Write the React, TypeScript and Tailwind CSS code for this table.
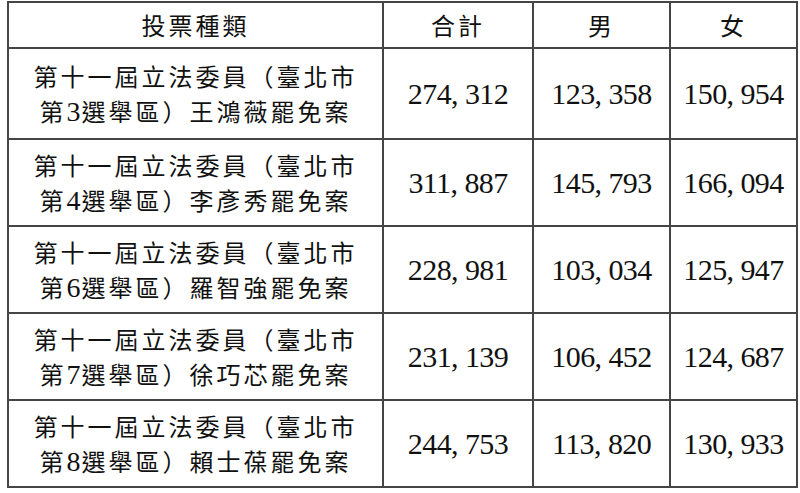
import React from "react";

const rows = [
  { d: "3", name: "王鴻薇", total: ["274", "312"], m: ["123", "358"], f: ["150", "954"] },
  { d: "4", name: "李彥秀", total: ["311", "887"], m: ["145", "793"], f: ["166", "094"] },
  { d: "6", name: "羅智強", total: ["228", "981"], m: ["103", "034"], f: ["125", "947"] },
  { d: "7", name: "徐巧芯", total: ["231", "139"], m: ["106", "452"], f: ["124", "687"] },
  { d: "8", name: "賴士葆", total: ["244", "753"], m: ["113", "820"], f: ["130", "933"] },
];

const cjk = "[font-family:'Noto_Sans_CJK_TC','Noto_Sans_CJK_SC',sans-serif]";

function Num({ v }: { v: string[] }) {
  return (
    <span className="font-['Liberation_Serif',serif] text-[30px] leading-none tracking-[-0.6px] text-[#111]">
      {v[0]}
      <span className="mr-[7px]">,</span>
      {v[1]}
    </span>
  );
}

const cell = "flex items-center justify-center border-r-2 border-b-2 border-[#454545]";

export default function App() {
  return (
    <div className="w-[800px] h-[493px] bg-white pt-px pl-[7px]">
      <div className="grid grid-cols-[375px_150px_137px_127px] grid-rows-[46px_91px_87px_87px_87px_87px] w-[791px] border-l-2 border-t-2 border-[#454545]">
        <div className={`${cell} ${cjk} text-[24px] tracking-[3px] text-[#111]`}>投票種類</div>
        <div className={`${cell} ${cjk} text-[24px] tracking-[3px] text-[#111]`}>合計</div>
        <div className={`${cell} ${cjk} text-[24px] tracking-[3px] text-[#111]`}>男</div>
        <div className={`${cell} ${cjk} text-[24px] tracking-[3px] text-[#111]`}>女</div>
        {rows.map((r) => (
          <React.Fragment key={r.d}>
            <div className={`${cell} flex-col ${cjk} text-[24px] leading-[35px] tracking-[3px] text-[#111]`}>
              <span>第十一屆立法委員（臺北市</span>
              <span>
                第<span className="font-['Liberation_Serif',serif] text-[28px] tracking-[1px]">{r.d}</span>選舉區）{r.name}罷免案
              </span>
            </div>
            <div className={cell}>
              <Num v={r.total} />
            </div>
            <div className={cell}>
              <Num v={r.m} />
            </div>
            <div className={cell}>
              <Num v={r.f} />
            </div>
          </React.Fragment>
        ))}
      </div>
    </div>
  );
}
